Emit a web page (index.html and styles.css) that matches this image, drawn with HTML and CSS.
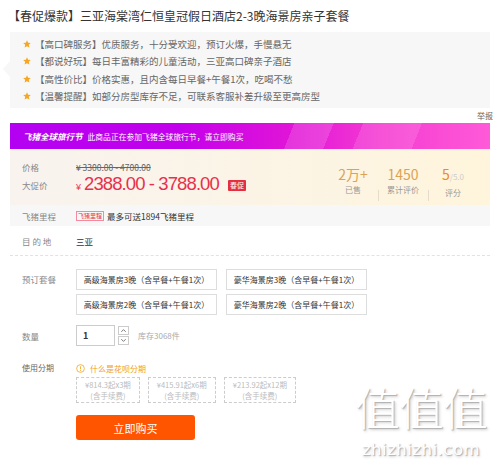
FILE: index.html
```html
<!DOCTYPE html>
<html lang="zh">
<head>
<meta charset="utf-8">
<link rel="stylesheet" href="styles.css">
</head>
<body>
<div class="title">【春促爆款】三亚海棠湾仁恒皇冠假日酒店2-3晚海景房亲子套餐</div>
<div class="features">
  <div class="feat"><svg class="star" viewBox="0 0 10 10"><polygon points="5,0.3 6.4,3.4 9.8,3.7 7.2,6 8,9.5 5,7.7 2,9.5 2.8,6 0.2,3.7 3.6,3.4" fill="#f5a623"/></svg>【高口碑服务】优质服务，十分受欢迎，预订火爆，手慢悬无</div>
  <div class="feat"><svg class="star" viewBox="0 0 10 10"><polygon points="5,0.3 6.4,3.4 9.8,3.7 7.2,6 8,9.5 5,7.7 2,9.5 2.8,6 0.2,3.7 3.6,3.4" fill="#f5a623"/></svg>【都说好玩】每日丰富精彩的儿童活动，三亚高口碑亲子酒店</div>
  <div class="feat"><svg class="star" viewBox="0 0 10 10"><polygon points="5,0.3 6.4,3.4 9.8,3.7 7.2,6 8,9.5 5,7.7 2,9.5 2.8,6 0.2,3.7 3.6,3.4" fill="#f5a623"/></svg>【高性价比】价格实惠，且内含每日早餐+午餐1次，吃喝不愁</div>
  <div class="feat"><svg class="star" viewBox="0 0 10 10"><polygon points="5,0.3 6.4,3.4 9.8,3.7 7.2,6 8,9.5 5,7.7 2,9.5 2.8,6 0.2,3.7 3.6,3.4" fill="#f5a623"/></svg>【温馨提醒】如部分房型库存不足，可联系客服补差升级至更高房型</div>
</div>
<div class="report-row"><span class="report">举报</span></div>
<div class="banner"><span class="banner-title">飞猪全球旅行节</span><span class="banner-text">此商品正在参加飞猪全球旅行节，请立即购买</span></div>
<div class="price-box">
  <div class="price-left">
    <div class="prow r1"><span class="lbl">价格</span><span class="orig">¥ 3300.00 - 4700.00</span></div>
    <div class="prow r2"><span class="lbl">大促价</span><span class="now"><span class="yen">¥</span>2388.00 - 3788.00</span><span class="tag">春促</span></div>
  </div>
  <div class="stats">
    <div class="stat"><div class="sv">2万+</div><div class="sl">已售</div></div>
    <div class="stat sepl"><div class="sv">1450</div><div class="sl">累计评价</div></div>
    <div class="stat sepl"><div class="sv score">5<span class="of">/5.0</span></div><div class="sl">评分</div></div>
  </div>
</div>
<div class="miles"><span class="lbl">飞猪里程</span><span class="mtag">飞猪里程</span><span class="mtext">最多可送1894飞猪里程</span></div>
<div class="dest"><span class="lbl">目 的 地</span><span class="val">三亚</span></div>
<div class="form">
  <div class="frow pkg">
    <span class="lbl">预订套餐</span>
    <div class="options">
      <div class="opt">高级海景房3晚（含早餐+午餐1次）</div>
      <div class="opt">豪华海景房3晚（含早餐+午餐1次）</div>
      <div class="opt">高级海景房2晚（含早餐+午餐1次）</div>
      <div class="opt">豪华海景房2晚（含早餐+午餐1次）</div>
    </div>
  </div>
  <div class="frow qty">
    <span class="lbl">数量</span>
    <div class="qinput">1</div>
    <div class="qbtns">
      <div class="qb"><svg viewBox="0 0 10 8"><polyline points="2.5,5.5 5,3 7.5,5.5" fill="none" stroke="#666" stroke-width="1"/></svg></div>
      <div class="qb"><svg viewBox="0 0 10 8"><polyline points="2.5,2.5 5,5 7.5,2.5" fill="none" stroke="#666" stroke-width="1"/></svg></div>
    </div>
    <span class="stock">库存3068件</span>
  </div>
  <div class="frow inst">
    <span class="lbl">使用分期</span>
    <div class="inst-body">
      <div class="what"><svg class="info" viewBox="0 0 10 10"><circle cx="5" cy="5" r="4.3" fill="none" stroke="#f5a623" stroke-width="0.9"/><line x1="5" y1="2.6" x2="5" y2="5.8" stroke="#f5a623" stroke-width="1"/><circle cx="5" cy="7.3" r="0.6" fill="#f5a623"/></svg>什么是花呗分期</div>
      <div class="plans">
        <div class="plan">¥814.3起x3期<br>(含手续费)</div>
        <div class="plan">¥415.91起x6期<br>(含手续费)</div>
        <div class="plan">¥213.92起x12期<br>(含手续费)</div>
      </div>
      <div class="buy">立即购买</div>
    </div>
  </div>
</div>
<div class="watermark"><div class="wm-big">值值值</div><div class="wm-small">zhizhizhi.com</div></div>
</body>
</html>
```
FILE: styles.css
```css
* { box-sizing: border-box; }
html, body { margin: 0; padding: 0; }
body {
  width: 500px;
  height: 467px;
  overflow: hidden;
  position: relative;
  background: #fff;
  color: #333;
  font-family: "Noto Sans CJK SC", "Noto Sans", sans-serif;
}
.title {
  height: 31px;
  line-height: 31px;
  font-size: 12px;
  padding-left: 8px;
  color: #333;
  white-space: nowrap;
}
.features {
  position: relative;
  margin: 1px 10px 0;
  height: 76px;
  background: #f7f7f7;
  padding: 3px 0 0 13px;
}
.features::before {
  content: "";
  position: absolute;
  left: -7px;
  top: 29px;
  border-top: 8px solid transparent;
  border-bottom: 8px solid transparent;
  border-right: 7px solid #f7f7f7;
}
.feat {
  display: flex;
  align-items: center;
  height: 17.5px;
  font-size: 9.5px;
  color: #666;
  white-space: nowrap;
}
.star { width: 8px; height: 8px; margin-right: 4px; flex: none; }
.report-row {
  height: 15px;
  display: flex;
  align-items: center;
  justify-content: flex-end;
  padding-right: 7px;
}
.report { font-size: 8px; color: #666; }
.banner {
  margin: 0 10px;
  height: 26px;
  display: flex;
  align-items: center;
  padding-left: 13px;
  color: #fff;
  background:
    linear-gradient(112deg, transparent 0 58%, rgba(255,255,255,.14) 58% 66%, transparent 66% 72%, rgba(255,255,255,.12) 72% 84%, transparent 84%),
    linear-gradient(90deg, #b400f2 0%, #c300ec 35%, #e014d8 58%, #f53cd2 78%, #ff5ad8 100%);
}
.banner-title { font-size: 8.5px; font-weight: bold; font-style: italic; margin-right: 5px; }
.banner-text { font-size: 7.8px; }
.price-box {
  margin: 0 10px;
  height: 56px;
  display: flex;
  justify-content: space-between;
  padding: 10px 12px 0 12px;
  background: linear-gradient(90deg, #f8f3ef 0%, #fbf4e6 50%, #fff5dc 100%);
}
.lbl {
  display: inline-block;
  width: 54px;
  font-size: 8.5px;
  color: #888;
  flex: none;
}
.prow { display: flex; align-items: center; }
.r1 { height: 15px; }
.r1 .orig, .r1 .lbl { line-height: 12px; }
.r2 { height: 21px; }
.orig { font-size: 8.5px; color: #666; text-decoration: line-through; }
.now {
  font-family: "Liberation Sans", sans-serif;
  font-size: 18.5px;
  color: #e8304c;
  letter-spacing: -0.9px;
  line-height: 20px;
  margin-top: 1px;
}
.yen { font-size: 9px; margin-right: 3px; letter-spacing: 0; }
.tag {
  margin-left: 9px;
  background: #e4303e;
  color: #fff;
  font-size: 7px;
  height: 11px;
  line-height: 11px;
  padding: 0 2px;
  border-radius: 1px;
  margin-top: 2px;
}
.stats { display: flex; padding-top: 7px; }
.stat {
  width: 50px;
  text-align: center;
  position: relative;
}
.sepl::before {
  content: "";
  position: absolute;
  left: 0;
  top: 24px;
  height: 11px;
  border-left: 1px solid #e6dccb;
}
.sv { font-size: 14px; line-height: 16px; color: #dba354; }
.score { color: #f08a1c; }
.of { font-size: 8px; color: #ccc; }
.sl { font-size: 8px; line-height: 12px; color: #999; margin-top: 2px; }
.miles {
  margin: 0 10px;
  height: 21px;
  background: #f7f7f7;
  padding-left: 12px;
  display: flex;
  align-items: center;
}
.mtag {
  font-size: 6px;
  color: #e8304c;
  border: 1px solid #f28aa0;
  padding: 0 1px;
  line-height: 8px;
  margin-right: 3px;
}
.mtext { font-size: 8.5px; color: #333; }
.dest {
  margin: 0 10px;
  height: 30px;
  padding-left: 12px;
  display: flex;
  align-items: center;
  border-bottom: 1px dashed #e2e2e2;
}
.val { font-size: 8.5px; color: #333; }
.form { padding: 13px 10px 0 22px; }
.frow { display: flex; }
.pkg .lbl { line-height: 21px; }
.options {
  display: grid;
  grid-template-columns: 141px 141px;
  column-gap: 9px;
  row-gap: 4px;
}
.opt {
  height: 21px;
  border: 1px solid #ddd;
  font-size: 8px;
  color: #333;
  display: flex;
  align-items: center;
  justify-content: center;
  white-space: nowrap;
}
.qty { margin-top: 10px; align-items: center; }
.qinput {
  width: 39px;
  height: 21px;
  border: 1px solid #ccc;
  font-size: 9px;
  font-weight: bold;
  line-height: 19px;
  padding-left: 6px;
  color: #333;
}
.qbtns { display: flex; flex-direction: column; gap: 1px; margin-left: 3px; }
.qb { width: 11px; height: 9px; border: 1px solid #ccc; display: flex; }
.qb svg { width: 9px; height: 7px; }
.stock { font-size: 8px; color: #aaa; margin-left: 9px; }
.inst { margin-top: 17px; }
.inst .lbl { line-height: 10px; color: #666; font-size: 8px; }
.what {
  display: flex;
  align-items: center;
  height: 10px;
  font-size: 8px;
  color: #f0a020;
}
.info { width: 9px; height: 9px; margin-right: 5px; }
.plans { display: flex; gap: 8px; margin-top: 4px; }
.plan {
  height: 26px;
  border: 1px dashed #ccc;
  padding: 0 8px;
  font-size: 7.5px;
  line-height: 11px;
  color: #bbb;
  text-align: center;
  display: flex;
  align-items: center;
  justify-content: center;
}
.buy {
  margin-top: 12px;
  width: 119px;
  height: 25px;
  background: #ff5500;
  border-radius: 3px;
  color: #fff;
  font-size: 11px;
  display: flex;
  align-items: center;
  justify-content: center;
}
.watermark {
  position: absolute;
  left: 348px;
  top: 374px;
  width: 146px;
  text-align: center;
  color: #fff;
  pointer-events: none;
}
.wm-big {
  font-size: 45px;
  line-height: 66px;
  height: 66px;
  font-weight: 300;
  letter-spacing: -1px;
  text-shadow: 1px 1px 1px #b0b0b0, 2px 2px 3px #d0d0d0;
}
.wm-small {
  font-family: "DejaVu Sans", sans-serif;
  font-size: 16.5px;
  line-height: 20px;
  letter-spacing: 0.5px;
  text-shadow: 1px 1px 1px #b0b0b0, 1px 2px 3px #d0d0d0;
}
```
